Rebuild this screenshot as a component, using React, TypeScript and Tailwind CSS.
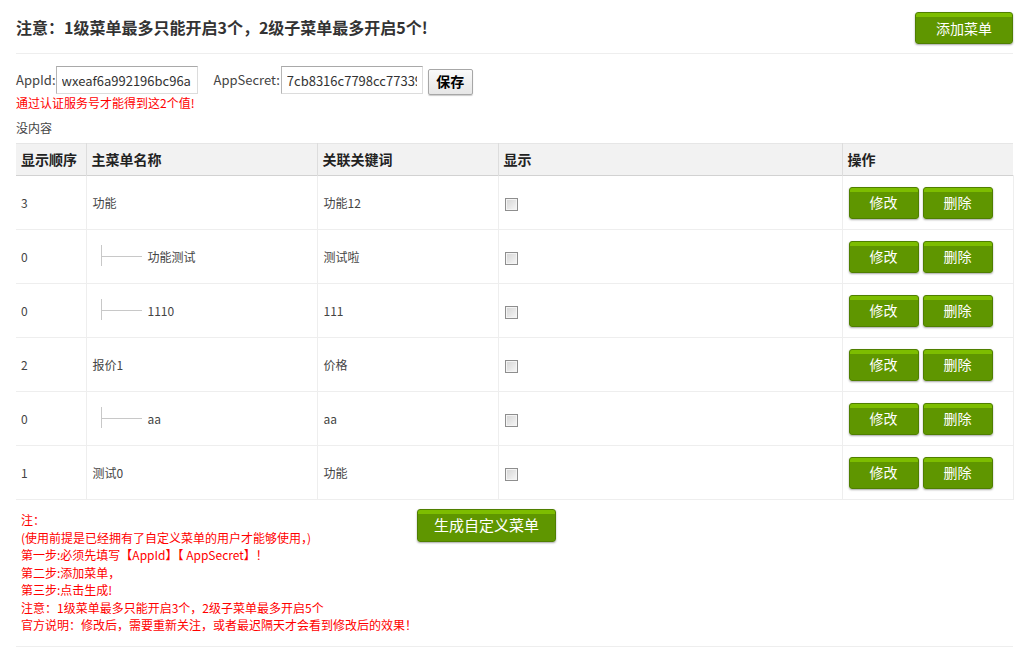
import React from "react";

const greenBtn =
  "inline-flex items-center justify-center text-white text-[14px] rounded-[3px] border border-[#4f7f00] bg-[linear-gradient(#7dbd00_0px,#7dbd00_4px,#5f9600_4px,#5f9600_100%)] shadow-[0_1px_2px_rgba(0,0,0,0.35)]";

type Row = { order: string; name: string; key: string; child?: boolean };

const rows: Row[] = [
  { order: "3", name: "功能", key: "功能12" },
  { order: "0", name: "功能测试", key: "测试啦", child: true },
  { order: "0", name: "1110", key: "111", child: true },
  { order: "2", name: "报价1", key: "价格" },
  { order: "0", name: "aa", key: "aa", child: true },
  { order: "1", name: "测试0", key: "功能" },
];

function Checkbox() {
  return (
    <span className="inline-block w-[13px] h-[13px] border border-[#8e8e8e] bg-[linear-gradient(135deg,#d4d4d4,#f7f7f7)] shadow-[inset_0_0_0_1px_#f4f4f4] align-middle" />
  );
}

export default function App() {
  return (
    <div
      className="w-[1027px] h-[649px] bg-white text-[#333] overflow-hidden"
      style={{ fontFamily: "'Microsoft YaHei','Noto Sans CJK SC',sans-serif" }}
    >
      <div className="ml-4 w-[997px]">
        {/* header */}
        <div className="flex items-start justify-between h-[54px] border-b border-[#eeeeee] pt-[12px]">
          <h1 className="text-[16px] leading-[30px] font-bold text-[#333]">
            注意：1级菜单最多只能开启3个，2级子菜单最多开启5个!
          </h1>
          <button className={`${greenBtn} w-[98px] h-[32px]`}>添加菜单</button>
        </div>

        {/* form */}
        <div className="flex items-center h-[28px] mt-[12px] text-[13px] text-[#444]">
          <span>AppId:</span>
          <input
            readOnly
            value="wxeaf6a992196bc96a"
            className="w-[142px] h-[28px] px-[5px] text-[13px] text-[#333] border border-[#dcdcdc] border-t-[#a9a9a9] border-l-[#b5b5b5] outline-none"
          />
          <span className="ml-[16px]">AppSecret:</span>
          <input
            readOnly
            value="7cb8316c7798cc77339"
            className="ml-[1px] w-[142px] h-[28px] px-[5px] text-[13px] text-[#333] border border-[#dcdcdc] border-t-[#a9a9a9] border-l-[#b5b5b5] outline-none"
          />
          <button className="ml-[5px] mt-[3px] w-[45px] h-[26px] text-[14px] font-bold text-black rounded-[2px] border border-[#a7a7a7] bg-[linear-gradient(#fafafa,#e6e6e6)] shadow-[0_1px_1px_rgba(0,0,0,0.2)]">
            保存
          </button>
        </div>
        <div className="mt-[1px] text-[12px] leading-[16px] text-[#ff0000]">
          通过认证服务号才能得到这2个值!
        </div>
        <div className="mt-[9px] text-[12px] leading-[16px] text-[#444]">没内容</div>

        {/* table */}
        <table className="mt-[7px] w-[997px] table-fixed border-collapse text-left">
          <colgroup>
            <col className="w-[70px]" />
            <col className="w-[231px]" />
            <col className="w-[181px]" />
            <col className="w-[344px]" />
            <col className="w-[171px]" />
          </colgroup>
          <thead>
            <tr className="h-[32px] bg-[#f2f2f2] border-t border-t-[#e6e6e6] border-b border-b-[#d2d2d2]">
              {["显示顺序", "主菜单名称", "关联关键词", "显示", "操作"].map((h, i) => (
                <th
                  key={h}
                  className={`px-[5px] text-[14px] font-bold text-[#222] ${i < 4 ? "border-r border-r-[#dddddd]" : ""}`}
                >
                  {h}
                </th>
              ))}
            </tr>
          </thead>
          <tbody className="text-[12px] text-[#444]">
            {rows.map((r, idx) => (
              <tr key={idx} className="h-[54px] border-b border-b-[#eeeeee]">
                <td className="px-[5px] border-r border-r-[#eeeeee]">{r.order}</td>
                <td className="px-[6px] border-r border-r-[#eeeeee]">
                  {r.child ? (
                    <span className="flex items-center">
                      <span className="ml-[8px] flex items-center h-[21px] border-l border-l-[#c8c8c8] mt-[-3px]">
                        <span className="w-[40px] h-px bg-[#c8c8c8] mt-[3px]" />
                      </span>
                      <span className="ml-[6px]">{r.name}</span>
                    </span>
                  ) : (
                    r.name
                  )}
                </td>
                <td className="px-[6px] border-r border-r-[#eeeeee]">{r.key}</td>
                <td className="px-[6px] border-r border-r-[#eeeeee]">
                  <Checkbox />
                </td>
                <td className="px-[6px] border-r border-r-[#eeeeee]">
                  <div className="flex gap-[4px]">
                    <button className={`${greenBtn} w-[70px] h-[32px]`}>修改</button>
                    <button className={`${greenBtn} w-[70px] h-[32px]`}>删除</button>
                  </div>
                </td>
              </tr>
            ))}
          </tbody>
        </table>

        {/* notes */}
        <div className="flex items-start h-[147px] border-b border-b-[#eeeeee]">
          <div className="w-[401px] pl-[5px] pt-[11px] text-[12px] leading-[17.5px] text-[#ff0000]">
            <div>注：</div>
            <div>(使用前提是已经拥有了自定义菜单的用户才能够使用，)</div>
            <div>第一步:必须先填写【AppId】【 AppSecret】！</div>
            <div>第二步:添加菜单，</div>
            <div>第三步:点击生成!</div>
            <div>注意：1级菜单最多只能开启3个，2级子菜单最多开启5个</div>
            <div>官方说明：修改后，需要重新关注，或者最迟隔天才会看到修改后的效果！</div>
          </div>
          <button className={`${greenBtn} mt-[9px] w-[139px] h-[33px] text-[15px]`}>生成自定义菜单</button>
        </div>
      </div>
    </div>
  );
}
